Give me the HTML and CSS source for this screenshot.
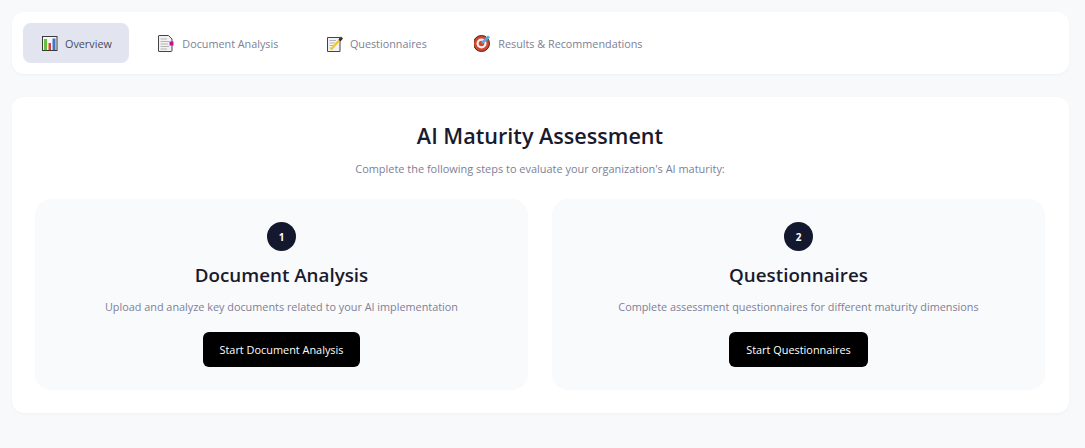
FILE: index.html
```html
<!DOCTYPE html>
<html lang="en">
<head>
  <meta charset="UTF-8">
  <title>AI Maturity Assessment</title>
  <link rel="stylesheet" href="styles.css">
</head>
<body>
  <!-- Tabs -->
  <nav class="tabs">
    <div class="tab active">
      <svg class="tab-icon" viewBox="0 0 19 18">
        <rect x="1.500" y="2.500" width="14.500" height="14" fill="#f6f6f6" stroke="#3a3a3a"/>
        <rect x="3" y="5" width="3" height="11" fill="#62c13c"/>
        <rect x="7.500" y="9" width="2.500" height="7" fill="#d6452b"/>
        <rect x="11.500" y="4.500" width="3" height="11.500" fill="#3f74c9"/>
      </svg>
      <span>Overview</span>
    </div>
    <div class="tab">
      <svg class="tab-icon" viewBox="2 0 19 18">
        <path d="M3 1.500H12.500L16 5V16.500Q16 17.500 15 17.500H3Q2.500 17.500 2.500 17V2Q2.500 1.500 3 1.500Z" fill="#f2f2f2" stroke="#444"/>
        <path d="M4.500 5H11M4.500 7.500H13M4.500 10H12M4.500 12.500H13M4.500 15H11" stroke="#b5b5b5" fill="none"/>
        <rect x="13.500" y="7.500" width="4" height="4" fill="#c4128c"/>
      </svg>
      <span>Document Analysis</span>
    </div>
    <div class="tab">
      <svg class="tab-icon" viewBox="0 0 19 18">
        <path d="M1.500 3.500H14V17.500H1.500Z" fill="#f2f2f2" stroke="#444"/>
        <path d="M3.500 6.500H10M3.500 9H9M3.500 11.500H7M3.500 14H5" stroke="#b5b5b5" fill="none"/>
        <path d="M5 15.500L13 6.500" stroke="#f0c52e" stroke-width="2" fill="none"/>
        <path d="M12.500 5.500L15 2.500L17 4.500L14.500 7.500Z" fill="#333"/>
      </svg>
      <span>Questionnaires</span>
    </div>
    <div class="tab">
      <svg class="tab-icon" viewBox="1 0 19 18">
        <circle cx="8.500" cy="9.500" r="8" fill="#d8432b" stroke="#2e2e2e"/>
        <circle cx="8.500" cy="9.500" r="5" fill="#f6f0ec"/>
        <circle cx="8.500" cy="9.500" r="2.800" fill="#d8432b"/>
        <path d="M9 9L16 2.500" stroke="#5aa6e6" stroke-width="3"/>
      </svg>
      <span>Results &amp; Recommendations</span>
    </div>
  </nav>

  <!-- Main panel -->
  <main class="panel">
    <h1>AI Maturity Assessment</h1>
    <p class="intro">Complete the following steps to evaluate your organization's AI maturity:</p>
    <div class="steps">
      <section class="step">
        <div class="step-number">1</div>
        <h2>Document Analysis</h2>
        <p>Upload and analyze key documents related to your AI implementation</p>
        <button class="step-button">Start Document Analysis</button>
      </section>
      <section class="step">
        <div class="step-number">2</div>
        <h2>Questionnaires</h2>
        <p>Complete assessment questionnaires for different maturity dimensions</p>
        <button class="step-button">Start Questionnaires</button>
      </section>
    </div>
  </main>
</body>
</html>
```

FILE: styles.css
```css
/* Base */
body {
  font-family: "Open Sans", "Noto Sans", sans-serif;
  margin: 0;
  padding: 12px 16px 35px 12px;
  background-color: #f8f9fb;
  color: #1a1a2e;
}

/* Tabs */
.tabs {
  display: flex;
  gap: 11.500px;
  height: 40px;
  padding: 11px;
  margin-bottom: 23px;
  background-color: #fff;
  border-radius: 12px;
  box-shadow: 0 1px 3px rgba(0, 0, 0, 0.04);
}
.tab {
  display: flex;
  align-items: center;
  gap: 5px;
  padding: 0 18px;
  border-radius: 8px;
  font-size: 10.800px;
  color: #7d8097;
}
.tab.active {
  padding-right: 17px;
  background-color: #e2e5f0;
  color: #4a4a5e;
}
.tab-icon {
  width: 19px;
  height: 18px;
  flex: none;
}

/* Panel */
.panel {
  height: 277px;
  padding: 16px 24px 23px 23px;
  background-color: #fff;
  border-radius: 12px;
  box-shadow: 0 1px 3px rgba(0, 0, 0, 0.04);
  text-align: center;
}
h1 {
  margin: 8px 0 0;
  font-size: 21.600px;
  font-weight: 600;
  line-height: 30px;
}
.intro {
  margin: 10px 0 22px;
  font-size: 10.950px;
  line-height: 16px;
  color: #7d8097;
}
.steps {
  display: grid;
  grid-template-columns: 1fr 1fr;
  gap: 24px;
}
.step {
  height: 191px;
  padding-top: 23px;
  box-sizing: border-box;
  background-color: #f9fafc;
  border-radius: 16px;
}
.step-number {
  display: flex;
  align-items: center;
  justify-content: center;
  width: 29px;
  height: 29px;
  margin: 0 auto;
  border-radius: 50%;
  background-color: #14182e;
  color: #fff;
  font-size: 10px;
  font-weight: 700;
}
h2 {
  margin: 11px 0 0;
  font-size: 18.800px;
  font-weight: 600;
  line-height: 26px;
}
.step p {
  margin: 11px 0 17px;
  font-size: 10.850px;
  line-height: 16px;
  color: #7d8097;
}
.step-button {
  height: 35px;
  padding: 0 17px;
  border: none;
  border-radius: 6px;
  background-color: #000;
  color: #fff;
  font-family: inherit;
  font-size: 10.900px;
  font-weight: 500;
}
```
